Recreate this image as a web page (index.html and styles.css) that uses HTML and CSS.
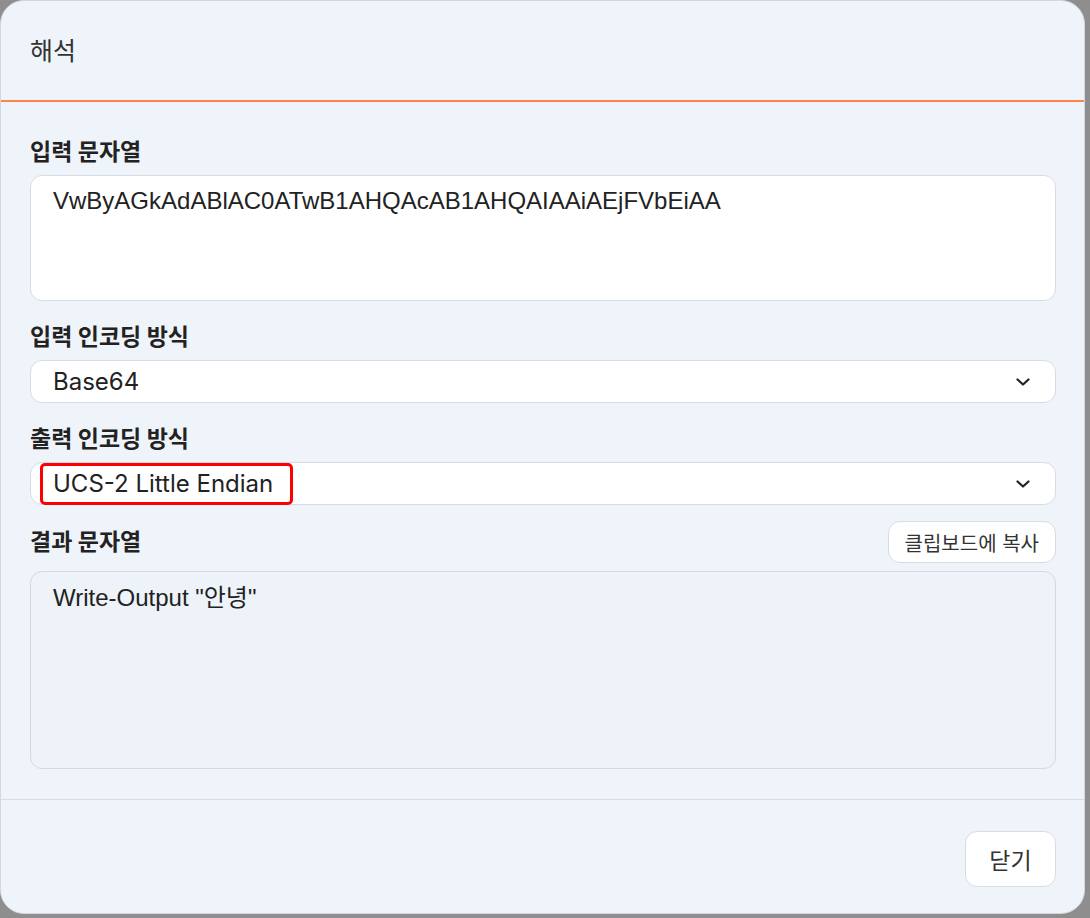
FILE: index.html
```html
<!DOCTYPE html>
<html lang="ko">
<head>
    <meta charset="UTF-8">
    <meta name="viewport" content="width=device-width, initial-scale=1.0">
    <title>해석</title>
    <link rel="stylesheet" href="styles.css">
</head>
<body>
    <div class="dialog">
        <div class="dialog-header">해석</div>

        <div class="dialog-body">
            <div class="field">
                <label class="field-label">입력 문자열</label>
                <div class="textbox input-box">VwByAGkAdABlAC0ATwB1AHQAcAB1AHQAIAAiAEjFVbEiAA</div>
            </div>

            <div class="field">
                <label class="field-label">입력 인코딩 방식</label>
                <div class="select">
                    <span>Base64</span>
                    <svg class="chevron" width="16" height="10" viewBox="0 0 16 10"><path d="M2.5 2.5 L8 7.5 L13.5 2.5" fill="none" stroke="#222" stroke-width="2.2" stroke-linecap="round" stroke-linejoin="round"/></svg>
                </div>
            </div>

            <div class="field">
                <label class="field-label">출력 인코딩 방식</label>
                <div class="select">
                    <span>UCS-2 Little Endian</span>
                    <svg class="chevron" width="16" height="10" viewBox="0 0 16 10"><path d="M2.5 2.5 L8 7.5 L13.5 2.5" fill="none" stroke="#222" stroke-width="2.2" stroke-linecap="round" stroke-linejoin="round"/></svg>
                    <div class="highlight"></div>
                </div>
            </div>

            <div class="field result-field">
                <div class="result-head">
                    <label class="field-label">결과 문자열</label>
                    <button class="btn btn-small">클립보드에 복사</button>
                </div>
                <div class="textbox result-box">Write-Output "안녕"</div>
            </div>
        </div>

        <div class="dialog-footer">
            <button class="btn btn-close">닫기</button>
        </div>
    </div>
</body>
</html>
```

FILE: styles.css
```css
html, body {
    margin: 0;
    height: 100%;
}
body {
    background: #8e8e8e;
    font-family: "Inter", "Noto Sans CJK KR", sans-serif;
    color: #222;
}
.dialog {
    width: 1085px;
    height: 914px;
    box-sizing: border-box;
    background: #eff3fa;
    border: 1px solid #d2d7e1;
    border-radius: 24px;
    display: flex;
    flex-direction: column;
    overflow: hidden;
}
.dialog-header {
    box-sizing: border-box;
    height: 101px;
    padding: 0 0 4px 29px;
    display: flex;
    align-items: center;
    font-size: 25px;
    color: #333;
    border-bottom: 2px solid #ff8447;
}
.dialog-body {
    padding: 38px 28px 0 29px;
    display: flex;
    flex-direction: column;
    gap: 24px;
    flex: 1;
    border-bottom: 1px solid #d6dbe5;
}
.field {
    display: flex;
    flex-direction: column;
    gap: 11px;
}
.field-label {
    font-size: 23px;
    font-weight: 700;
    line-height: 24px;
    color: #222;
}
.textbox {
    box-sizing: border-box;
    border: 1px solid #d6dbe5;
    border-radius: 12px;
    padding: 11px 22px;
    font-family: "Liberation Sans", "Noto Sans CJK KR", sans-serif;
    font-size: 24px;
    line-height: 28px;
    color: #222;
}
.input-box {
    background: #fff;
    height: 126px;
}
.select {
    position: relative;
    box-sizing: border-box;
    height: 43px;
    background: #fff;
    border: 1px solid #d6dbe5;
    border-radius: 12px;
    padding: 0 24px 0 22px;
    display: flex;
    align-items: center;
    justify-content: space-between;
    font-size: 24px;
}
.chevron {
    display: block;
}
.highlight {
    position: absolute;
    left: 9px;
    top: 0;
    width: 253px;
    height: 42px;
    box-sizing: border-box;
    border: 3px solid #f00;
    border-radius: 5px;
}
.result-field {
    margin-top: -8px;
    gap: 8px;
}
.result-head {
    display: flex;
    align-items: center;
    justify-content: space-between;
}
.result-box {
    height: 198px;
    background: #eef2f9;
    border-color: #d3d8e3;
    padding-top: 12px;
}
.btn {
    font-family: "Inter", "Noto Sans CJK KR", sans-serif;
    background: #fff;
    border: 1px solid #d6dbe5;
    border-radius: 12px;
    color: #333;
}
.btn-small {
    height: 42px;
    padding: 0 16px;
    font-size: 20px;
}
.dialog-footer {
    height: 113px;
    display: flex;
    justify-content: flex-end;
    align-items: flex-start;
    padding: 31px 28px 0 0;
    box-sizing: border-box;
}
.btn-close {
    width: 91px;
    height: 56px;
    font-size: 23px;
}
```
